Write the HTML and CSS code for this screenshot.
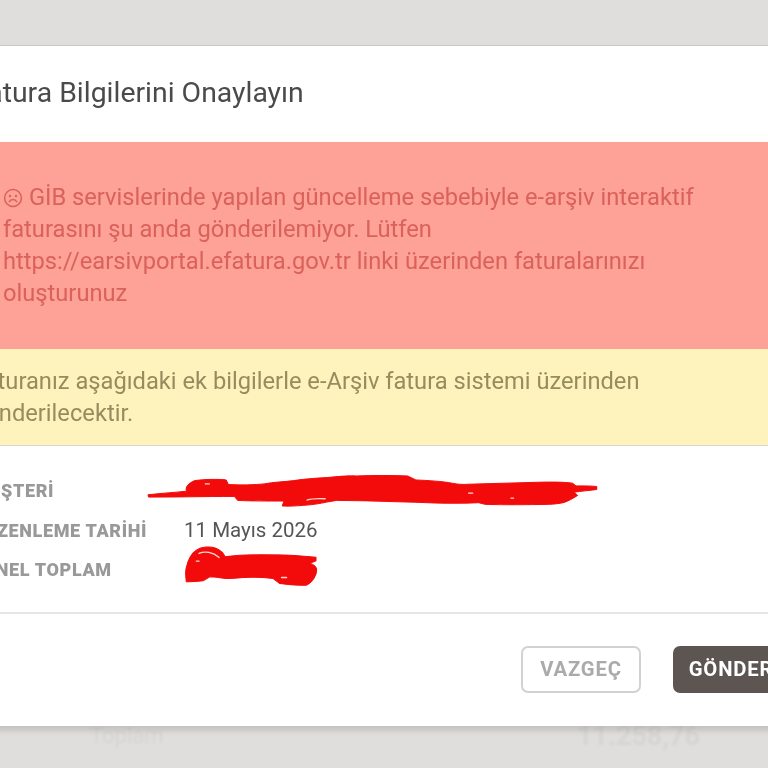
FILE: index.html
```html
<!DOCTYPE html>
<html lang="tr" dir="ltr">
<head>
    <meta charset="utf-8">
    <title>Fatura Bilgilerini Onaylayın</title>
    <link rel="stylesheet" href="styles.css">
</head>
<body>
    <div class="modal">
        <h1 class="modal_title">Fatura Bilgilerini Onaylayın</h1>

        <div class="alert_error">
            <p>
                <svg class="sad_icon" viewBox="0 0 20 20" aria-hidden="true">
                    <circle cx="10" cy="10" r="8.4"></circle>
                    <circle class="eye" cx="7" cy="8" r="1.2"></circle>
                    <circle class="eye" cx="13" cy="8" r="1.2"></circle>
                    <path d="M6 14.2c1-1.8 2.4-2.6 4-2.6s3 .8 4 2.6"></path>
                </svg>
                GİB servislerinde yapılan güncelleme sebebiyle e-arşiv interaktif faturasını şu anda gönderilemiyor. Lütfen https://earsivportal.efatura.gov.tr linki üzerinden faturalarınızı oluşturunuz
            </p>
        </div>

        <div class="alert_warning">
            Faturanız aşağıdaki ek bilgilerle e-Arşiv fatura sistemi üzerinden gönderilecektir.
        </div>

        <div class="details">
            <div class="label">MÜŞTERİ</div>
            <div class="value">
                <!-- red scribble over the customer name -->
                <svg class="scribble scribble_name" viewBox="40 40 1380 100" aria-hidden="true">
                    <path d="M48 103C90 98 130 96 165 92C160 80 170 68 190 60C220 56 260 55 285 58L292 72C330 74 370 73 400 70C430 64 460 64 490 60C530 54 570 52 600 50C640 46 660 45 680 46C730 44 790 44 835 46L860 58C900 60 940 62 970 68C990 72 1005 72 1020 71C1090 68 1160 68 1230 65C1270 64 1310 64 1335 68L1345 76C1370 76 1390 76 1408 78V87C1385 90 1360 92 1340 95L1350 105C1335 115 1320 122 1310 126C1295 130 1280 131 1260 132C1200 133 1130 134 1070 132L1050 127C1010 129 960 129 920 128C880 126 840 125 800 124C740 122 680 120 620 120L590 125C570 130 545 133 520 135C495 137 475 138 455 137L460 122C410 122 360 122 320 120L310 108C220 108 130 110 50 110Z"></path>
                    <path class="scribble_gap" d="M222 70H234M530 119C545 114 565 114 585 115M1020 98H1032M1148 113H1156"></path>
                </svg>
            </div>
            <div class="label">DÜZENLEME TARİHİ</div>
            <div class="value">11 Mayıs 2026</div>
            <div class="label">GENEL TOPLAM</div>
            <div class="value">
                <svg class="scribble scribble_total" viewBox="160 255 410 125" aria-hidden="true">
                    <path d="M170 322C175 300 185 280 200 270C215 260 240 258 258 264C272 270 282 280 286 290C320 285 350 284 390 284C430 284 470 284 495 286L558 291V302L540 309C552 314 560 320 560 328C560 338 558 346 552 354C545 364 538 372 528 375C505 376 475 374 450 370L430 355C400 351 370 350 340 352C320 354 305 356 290 355C270 353 255 350 240 350L220 362C200 364 185 365 170 365C168 350 166 335 170 322Z"></path>
                    <path class="scribble_gap" d="M208 280C225 272 250 276 268 292M200 303H208M455 352H470"></path>
                </svg>
            </div>
        </div>

        <div class="modal_footer">
            <button class="btn btn_cancel" type="button">VAZGEÇ</button>
            <button class="btn btn_send" type="button">GÖNDER</button>
        </div>
    </div>

    <div class="behind_row">
        <span>Toplam</span>
        <span class="behind_total">11.258,76</span>
    </div>
</body>
</html>
```

FILE: styles.css
```css
body {
    margin: 0;
    height: 100vh;
    overflow: hidden;
    background: #dfdedc;
    font-family: Roboto, sans-serif;
}

.modal {
    position: relative;
    z-index: 1;
    box-sizing: border-box;
    width: 883px;
    height: 681px;
    margin: 45px 0 0 -60px;
    background: #fff;
    border-top: 1px solid #c8c8c6;
    box-shadow: 0 8px 5px -3px rgba(0, 0, 0, 0.12);
    display: flex;
    flex-direction: column;
    filter: blur(0.4px);
}

.modal_title {
    height: 96px;
    margin: 0;
    padding: 0 32px;
    font-size: 28.4px;
    font-weight: 400;
    line-height: 94px;
    color: #4a4a4a;
}

.alert_error {
    height: 207px;
    box-sizing: border-box;
    padding: 39px 32px 0 63px;
    background: #fea196;
    color: #d9625c;
    font-size: 23.7px;
    line-height: 32px;
}

.alert_error p {
    margin: 0;
    max-width: 740px;
}

.sad_icon {
    width: 20px;
    height: 20px;
    vertical-align: -3px;
    fill: none;
    stroke: #d9625c;
    stroke-width: 1.5;
}

.sad_icon .eye {
    fill: #d9625c;
    stroke: none;
}

.alert_warning {
    height: 97px;
    box-sizing: border-box;
    padding: 16px 32px 0;
    background: #fef2bd;
    border-bottom: 1px solid #d8d8d2;
    color: #968d5e;
    font-size: 23.7px;
    line-height: 32px;
}

.details {
    height: 168px;
    box-sizing: border-box;
    padding: 25px 32px 0;
    border-bottom: 2px solid #e6e6e6;
    display: grid;
    grid-template-columns: 212px 1fr;
    grid-auto-rows: 39.5px;
    align-items: center;
}

.label {
    font-size: 18px;
    font-weight: 900;
    letter-spacing: 0.65px;
    color: #999;
}

.value {
    position: relative;
    font-size: 20.5px;
    color: #555;
}

.scribble {
    position: absolute;
    fill: #f30a0a;
    stroke: #f30a0a;
    stroke-width: 3;
    stroke-linejoin: round;
}

.scribble_gap {
    fill: none;
    stroke: #ffd9d0;
    stroke-width: 4;
    stroke-linecap: round;
}

.scribble_name {
    left: -41px;
    top: -17px;
    width: 460px;
    height: 33px;
}

.scribble_total {
    left: -1px;
    top: -25px;
    width: 137px;
    height: 42px;
}

.modal_footer {
    flex: 1;
    padding: 32px 32px 0;
    display: flex;
    justify-content: flex-end;
    align-items: flex-start;
    gap: 32px;
}

.btn {
    height: 47px;
    box-sizing: border-box;
    padding: 0 0 2px;
    border-radius: 7px;
    font-family: Roboto, sans-serif;
    font-size: 20.3px;
    font-weight: 700;
    letter-spacing: 0.8px;
}

.btn_cancel {
    width: 120px;
    background: #fff;
    border: 2px solid #d2d2d2;
    color: #aaa;
}

.btn_send {
    width: 118px;
    padding-right: 2px;
    background: #5d5552;
    border: none;
    color: #fff;
}

.behind_row {
    display: flex;
    padding: 0 68px 0 90px;
    justify-content: space-between;
    font-size: 22px;
    line-height: 20px;
    color: #d6d5d3;
    filter: blur(1.2px);
}

.behind_total {
    font-size: 27px;
    font-weight: 700;
}
```
